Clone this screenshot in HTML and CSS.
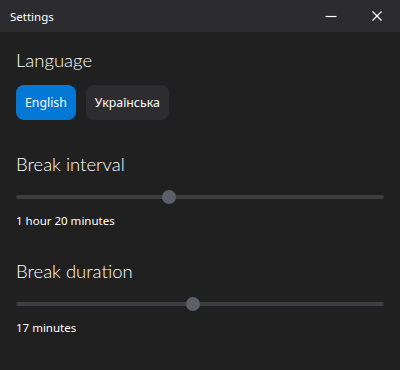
FILE: index.html
```html
<!DOCTYPE html>
<html lang="en">
<head>
  <meta charset="UTF-8">
  <title>Settings</title>
  <link rel="stylesheet" href="styles.css">
</head>
<body>
  <header class="titlebar">
    <span class="title">Settings</span>
    <div class="window-buttons">
      <button class="win-btn" aria-label="Minimize">
        <svg width="12" height="12" viewBox="0 0 12 12"><path d="M0.5 6.5h11" stroke="#fff" stroke-width="1.2"/></svg>
      </button>
      <button class="win-btn" aria-label="Close">
        <svg width="12" height="12" viewBox="0 0 12 12"><path d="M1.5 1.5l9 9M10.5 1.5l-9 9" stroke="#fff" stroke-width="1.3"/></svg>
      </button>
    </div>
  </header>

  <main class="content">
    <section class="group">
      <h2>Language</h2>
      <div class="lang-buttons">
        <button class="lang active">English</button>
        <button class="lang">Українська</button>
      </div>
    </section>

    <section class="group">
      <h2>Break interval</h2>
      <input type="range" class="slider" min="0" max="1000" value="412">
      <p class="value">1 hour 20 minutes</p>
    </section>

    <section class="group">
      <h2>Break duration</h2>
      <input type="range" class="slider" min="0" max="1000" value="480">
      <p class="value">17 minutes</p>
    </section>
  </main>
</body>
</html>
```

FILE: styles.css
```css
:root {
  --bg-color: #202020;
  --title-bg: #2c2c2e;
  --text-color: #ffffff;
  --accent: #0078d4;
  --btn-bg: #2d2d2f;
  --track: #3e3e42;
  --thumb: #5e5e68;
}

* {
  box-sizing: border-box;
}

body {
  margin: 0;
  width: 400px;
  height: 370px;
  background-color: var(--bg-color);
  color: var(--text-color);
  font-family: 'Noto Sans', 'Open Sans', sans-serif;
  overflow: hidden;
}

.titlebar {
  height: 32px;
  background-color: var(--title-bg);
  display: flex;
  align-items: center;
  justify-content: space-between;
  padding-left: 10px;
}

.title {
  font-size: 11.5px;
}

.window-buttons {
  display: flex;
  height: 100%;
}

.win-btn {
  width: 46px;
  height: 32px;
  border: none;
  background: transparent;
  display: flex;
  align-items: center;
  justify-content: center;
  padding: 0;
}

.content {
  padding: 0 16px;
}

.group h2 {
  font-family: 'Lato', 'Noto Sans', sans-serif;
  font-size: 18.5px;
  font-weight: 300;
  margin: 0;
  line-height: 24px;
}

.group:first-child {
  padding-top: 16px;
}

.group:nth-child(2) {
  margin-top: 32px;
}

.group:nth-child(3) {
  margin-top: 30px;
}

.lang-buttons {
  display: flex;
  gap: 10px;
  margin-top: 13px;
}

.lang {
  height: 35px;
  padding: 0 9px;
  border: none;
  border-radius: 8px;
  background-color: var(--btn-bg);
  color: var(--text-color);
  font-family: inherit;
  font-size: 12.3px;
}

.lang.active {
  background-color: var(--accent);
}

.slider {
  -webkit-appearance: none;
  appearance: none;
  display: block;
  width: 100%;
  height: 14px;
  margin: 14px 0 0;
  background: transparent;
}

.slider::-webkit-slider-runnable-track {
  height: 4px;
  background-color: var(--track);
  border-radius: 2px;
}

.slider::-webkit-slider-thumb {
  -webkit-appearance: none;
  width: 14px;
  height: 14px;
  border-radius: 50%;
  background-color: var(--thumb);
  margin-top: -5px;
}

.value {
  font-size: 11.5px;
  margin: 9px 0 0;
  line-height: 16px;
}
```
